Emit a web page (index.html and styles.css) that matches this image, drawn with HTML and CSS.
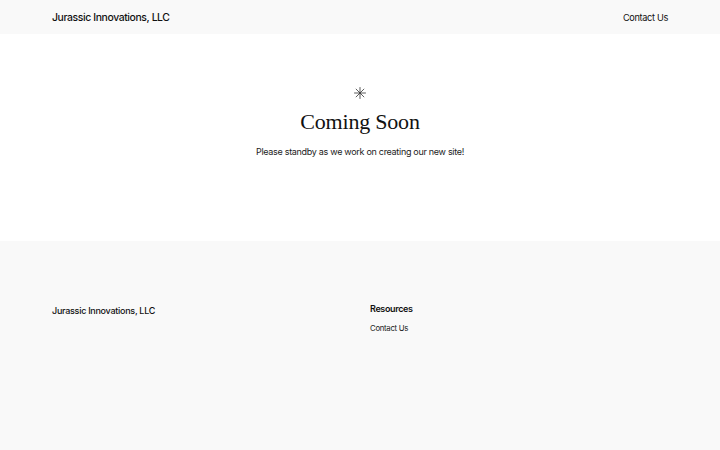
FILE: index.html
```html
<!DOCTYPE html>
<html>
<head>
<meta charset="utf-8">
<link rel="stylesheet" href="styles.css">
</head>
<body>
<header class="site-header">
  <div class="site-title">Jurassic Innovations, LLC</div>
  <nav class="nav"><a href="#">Contact Us</a></nav>
</header>
<main class="main">
  <svg class="star" width="12" height="12" viewBox="0 0 24 24" aria-hidden="true">
    <g stroke="#333" stroke-width="1.6" stroke-linecap="round">
      <line x1="12" y1="1" x2="12" y2="23"/>
      <line x1="1" y1="12" x2="23" y2="12"/>
      <line x1="4.2" y1="4.2" x2="19.8" y2="19.8"/>
      <line x1="19.8" y1="4.2" x2="4.2" y2="19.8"/>
    </g>
  </svg>
  <h1 class="heading">Coming Soon</h1>
  <p class="lead">Please standby as we work on creating our new site!</p>
</main>
<footer class="site-footer">
  <div class="footer-title">Jurassic Innovations, LLC</div>
  <div class="footer-col">
    <h2 class="footer-heading">Resources</h2>
    <a class="footer-link" href="#">Contact Us</a>
  </div>
</footer>
</body>
</html>
```
FILE: styles.css
```css
* { box-sizing: border-box; }
html, body { margin: 0; padding: 0; }
body {
  font-family: Inter, "Liberation Sans", sans-serif;
  color: #111;
  background: #fff;
  width: 720px;
  height: 450px;
  overflow: hidden;
}
a { color: inherit; text-decoration: none; }
.site-header {
  background: #f9f9f9;
  height: 34px;
  padding: 0 52px;
  display: flex;
  align-items: center;
  justify-content: space-between;
}
.site-title {
  font-size: 10.4px;
  font-weight: 500;
  letter-spacing: -0.38px;
}
.nav {
  font-size: 9.2px;
  letter-spacing: -0.33px;
}
.main {
  height: 207px;
  display: flex;
  flex-direction: column;
  align-items: center;
  padding-top: 53px;
}
.star { display: block; }
.heading {
  font-family: "Liberation Serif", serif;
  font-weight: 400;
  font-size: 22px;
  margin: 8px 0 0;
  line-height: 30px;
  letter-spacing: -0.2px;
}
.lead {
  font-size: 9px;
  margin: 9px 0 0;
  line-height: 11px;
  letter-spacing: -0.3px;
  color: #222;
}
.site-footer {
  background: #f9f9f9;
  height: 209px;
  padding: 64px 52px 0;
  display: grid;
  grid-template-columns: 318px 1fr;
  align-items: start;
}
.footer-title {
  font-size: 9px;
  font-weight: 500;
  line-height: 12px;
  letter-spacing: -0.28px;
}
.footer-col { display: flex; flex-direction: column; }
.footer-heading {
  font-size: 9px;
  font-weight: 600;
  margin: -2px 0 0;
  line-height: 12px;
  letter-spacing: -0.36px;
}
.footer-link {
  font-size: 7.8px;
  margin-top: 8px;
  letter-spacing: -0.3px;
  color: #222;
}
```
